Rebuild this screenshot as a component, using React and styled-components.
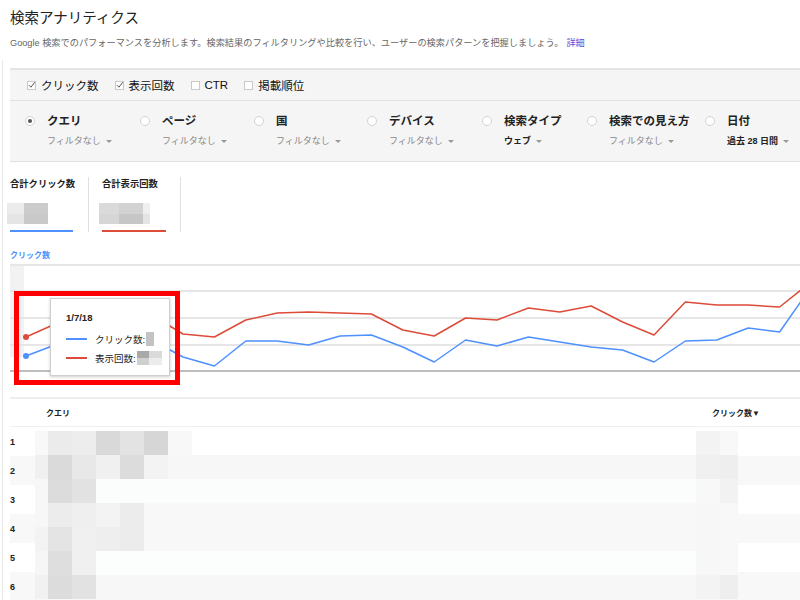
import React from 'react';
import styled, { createGlobalStyle } from 'styled-components';

const GlobalStyle = createGlobalStyle`
  body {
    margin: 0;
    background: #fff;
    font-family: "Liberation Sans", "Noto Sans CJK JP", sans-serif;
    color: #222;
    overflow: hidden;
  }
`;

const toggles = [
  { label: 'クリック数', checked: true },
  { label: '表示回数', checked: true },
  { label: 'CTR', checked: false },
  { label: '掲載順位', checked: false },
];

const dimensions = [
  { label: 'クエリ', sub: 'フィルタなし', w: 115, selected: true },
  { label: 'ページ', sub: 'フィルタなし', w: 114 },
  { label: '国', sub: 'フィルタなし', w: 113 },
  { label: 'デバイス', sub: 'フィルタなし', w: 115 },
  { label: '検索タイプ', sub: 'ウェブ', w: 105, strong: true },
  { label: '検索での見え方', sub: 'フィルタなし', w: 118 },
  { label: '日付', sub: '過去 28 日間', w: 90, strong: true },
];

const red = [338, 324, 322, 326, 316, 335, 338, 321, 314, 313, 314, 315, 331, 337, 319, 321, 309, 313, 307, 323, 336, 303, 306, 306, 308, 283];
const blue = [357, 345, 344, 343, 341, 358, 367, 342, 342, 346, 337, 336, 348, 363, 341, 347, 338, 343, 348, 351, 363, 342, 341, 329, 333, 288];

const toPoints = (arr) =>
  arr.map((y, k) => `${(16 + 31.4 * k).toFixed(1)},${y - 263}`).join(' ');

// pixelated blur blocks over the query table (24px grid)
const mosaic = [
  ['#f8f8f8', '#ebebeb', '#ededed', '#d9d9d9', '#e3e3e3', '#d6d6d6', '#f8f8f8', '#ffffff', '#f3f3f3', '#f8f8f8'],
  ['#f0f0f0', '#dadada', '#e8e8e8', '#f0f0f0', '#dcdcdc', '#f3f3f3', '#f7f7f7', '#f7f7f7', '#f0f0f0', '#eeeeee'],
  ['#f7f7f7', '#dcdcdc', '#e2e2e2', '#fbfcfc', '#fbfcfc', '#fbfcfc', '#fbfcfc', '#fbfcfc', '#f8f8f8', '#f2f2f2'],
  ['#f7f7f7', '#ececec', '#efefef', '#f3f3f3', '#ececec', '#f8f8f8', '#f8f8f8', '#f8f8f8', '#f7f7f7', '#f8f8f8'],
  ['#f3f3f3', '#e4e4e4', '#f0f0f0', '#eeeeee', '#ececec', '#f8f8f8', '#f8f8f8', '#f8f8f8', '#f7f7f7', '#f8f8f8'],
  ['#f6f6f6', '#dedede', '#f0f0f0', '#fcfdfd', '#fcfdfd', '#fcfdfd', '#fcfdfd', '#fcfdfd', '#f7f7f7', '#f8f8f8'],
  ['#f1f1f1', '#dcdcdc', '#e2e2e2', '#f7f7f7', '#f7f7f7', '#f7f7f7', '#f7f7f7', '#f7f7f7', '#f3f3f3', '#eeeeee'],
];
const mosaicWidths = [13, 24, 24, 24, 24, 24, 24, 504, 24, 18];

const CheckIcon = ({ checked }) => (
  <svg width="10" height="10" viewBox="0 0 10 10">
    <rect x="0.5" y="1.5" width="8" height="8" fill="#fff" stroke="#c9c9c9" />
    {checked && <path d="M2 5.2 L3.9 7.2 L7.8 2.2" fill="none" stroke="#555" strokeWidth="1" />}
  </svg>
);

const App = () => {
  return (
    <Page>
      <GlobalStyle />
      <Header>
        <Title>検索アナリティクス</Title>
        <Desc>
          Google 検索でのパフォーマンスを分析します。検索結果のフィルタリングや比較を行い、ユーザーの検索パターンを把握しましょう。
          <Link>詳細</Link>
        </Desc>
      </Header>

      <Main>
        <Toggles>
          {toggles.map((t) => (
            <ToggleItem key={t.label}>
              <CheckIcon checked={t.checked} />
              <span>{t.label}</span>
            </ToggleItem>
          ))}
        </Toggles>

        <Dimensions>
          {dimensions.map((d) => (
            <DimItem key={d.label} $w={d.w}>
              <Radio $selected={d.selected} />
              <DimText>
                <DimLabel>{d.label}</DimLabel>
                <DimSub $strong={d.strong}>
                  {d.sub}
                  <Caret />
                </DimSub>
              </DimText>
            </DimItem>
          ))}
        </Dimensions>

        <Metrics>
          <MetricCard $w={79} $pl={0} $pr={16}>
            <MetricLabel>合計クリック数</MetricLabel>
            <Blur $ml={-3}>
              <BlurCol $w={17} $top="#ebebeb" $bottom="#e5e5e5" />
              <BlurCol $w={24} $top="#cccccc" $bottom="#c9c9c9" />
            </Blur>
            <Underline $color="#4d90fe" $w={63} />
          </MetricCard>
          <MetricCard $w={92} $pl={13} $pr={15}>
            <MetricLabel>合計表示回数</MetricLabel>
            <Blur $ml={-3}>
              <BlurCol $w={20} $top="#dadada" $bottom="#d6d6d6" />
              <BlurCol $w={24} $top="#d2d2d2" $bottom="#c6c6c6" />
              <BlurCol $w={7} $top="#efefef" $bottom="#e4e4e4" />
            </Blur>
            <Underline $color="#dd4b39" $w={64} />
          </MetricCard>
        </Metrics>

        <ChartLabel>クリック数</ChartLabel>
        <ChartArea>
          <svg width="790" height="113" viewBox="0 0 790 113">
            <rect x="0" y="4" width="14" height="91" fill="#f2f2f2" />
            {[3, 29, 56, 83].map((y) => (
              <line key={y} x1="0" x2="790" y1={y} y2={y} stroke="#e6e6e6" strokeWidth="2" />
            ))}
            <line x1="0" x2="790" y1="109" y2="109" stroke="#a8a8a8" strokeWidth="1.5" />
            <polyline points={toPoints(red)} fill="none" stroke="#dd4b39" strokeWidth="1.5" strokeLinejoin="round" />
            <polyline points={toPoints(blue)} fill="none" stroke="#4d90fe" strokeWidth="1.5" strokeLinejoin="round" />
            <circle cx="16" cy={338 - 263} r="3" fill="#dd4b39" />
            <circle cx="16" cy={357 - 263} r="3" fill="#4d90fe" />
          </svg>
          <Highlight />
          <Tooltip>
            <TipDate>1/7/18</TipDate>
            <TipRows>
              <TipRow>
                <Swatch $color="#4d90fe" />
                <span>クリック数:</span>
                <TipBlur>
                  <BlurCol $w={8} $top="#c3c3c3" $bottom="#c3c3c3" />
                </TipBlur>
              </TipRow>
              <TipRow>
                <Swatch $color="#dd4b39" />
                <span>表示回数:</span>
                <TipBlur>
                  <BlurCol $w={12} $top="#a9a9a9" $bottom="#d0d0d0" />
                  <BlurCol $w={13} $top="#dadada" $bottom="#ececec" />
                </TipBlur>
              </TipRow>
            </TipRows>
          </Tooltip>
        </ChartArea>

        <Table>
          <HeadRow>
            <HeadQuery>クエリ</HeadQuery>
            <HeadClicks>クリック数▼</HeadClicks>
          </HeadRow>
          <TableBody>
            {[1, 2, 3, 4, 5, 6].map((n) => (
              <Row key={n} $odd={n % 2 === 0}>
                <RowNum>{n}</RowNum>
              </Row>
            ))}
            <Mosaic>
              {mosaic.map((band, i) => (
                <MosaicBand key={i}>
                  {band.map((c, j) => (
                    <MosaicCell key={j} $w={mosaicWidths[j]} $c={c} />
                  ))}
                </MosaicBand>
              ))}
            </Mosaic>
          </TableBody>
        </Table>
      </Main>
    </Page>
  );
};

export default App;

const Page = styled.div`
  width: 800px;
  height: 600px;
  padding-left: 10px;
  box-sizing: border-box;
  overflow: hidden;
`;

const Header = styled.header`
  padding: 8px 0 18px;
`;

const Title = styled.h1`
  margin: 0;
  font-size: 14.5px;
  line-height: 20px;
  font-weight: normal;
  color: #222;
`;

const Desc = styled.p`
  margin: 8px 0 0;
  font-size: 9.2px;
  line-height: 14px;
  color: #666;
  white-space: nowrap;
`;

const Link = styled.a`
  color: #6a4bd6;
  margin-left: 3px;
  cursor: pointer;
`;

const Main = styled.main`
  position: relative;
  border-top: 2px solid #e4e4e4;

  &::before {
    content: '';
    position: absolute;
    left: -8px;
    top: -10px;
    bottom: 0;
    width: 1px;
    background: #e8e8e8;
  }
`;

const Toggles = styled.div`
  display: flex;
  align-items: center;
  height: 30px;
  padding-left: 17px;
  background: #f5f5f5;
  border-bottom: 1px solid #e2e2e2;
`;

const ToggleItem = styled.label`
  display: flex;
  align-items: center;
  gap: 4px;
  margin-right: 16px;
  font-size: 11.5px;
  color: #111;

  svg {
    display: block;
  }
`;

const Dimensions = styled.div`
  display: flex;
  align-items: flex-start;
  height: 61px;
  box-sizing: border-box;
  padding: 12px 0 0 15px;
  background: #f5f5f5;
  border-bottom: 1px solid #e2e2e2;
`;

const DimItem = styled.div`
  display: flex;
  align-items: flex-start;
  width: ${(p) => p.$w}px;
  flex-shrink: 0;
`;

const Radio = styled.span`
  position: relative;
  width: 10px;
  height: 10px;
  margin-top: 3px;
  margin-right: 12px;
  box-sizing: border-box;
  border: 1px solid #d3d3d3;
  border-radius: 50%;
  background: #fff;
  flex-shrink: 0;

  &::after {
    content: '';
    display: ${(p) => (p.$selected ? 'block' : 'none')};
    position: absolute;
    left: 2px;
    top: 2px;
    width: 4px;
    height: 4px;
    border-radius: 50%;
    background: #555;
  }
`;

const DimText = styled.div`
  display: flex;
  flex-direction: column;
  white-space: nowrap;
`;

const DimLabel = styled.span`
  font-size: 11.5px;
  line-height: 16px;
  font-weight: bold;
  color: #222;
`;

const DimSub = styled.span`
  display: flex;
  align-items: center;
  margin-top: 5px;
  font-size: 9px;
  line-height: 14px;
  color: ${(p) => (p.$strong ? '#222' : '#888')};
  font-weight: ${(p) => (p.$strong ? 'bold' : 'normal')};
`;

const Caret = styled.span`
  margin-left: 5px;
  width: 0;
  height: 0;
  border-left: 3px solid transparent;
  border-right: 3px solid transparent;
  border-top: 3px solid #999;
`;

const Metrics = styled.section`
  display: flex;
  padding-top: 15px;
`;

const MetricCard = styled.div`
  display: flex;
  flex-direction: column;
  width: ${(p) => p.$w}px;
  padding-left: ${(p) => p.$pl}px;
  padding-right: ${(p) => p.$pr}px;
  box-sizing: border-box;
  border-right: 1px solid #e0e0e0;
  white-space: nowrap;
`;

const MetricLabel = styled.span`
  font-size: 9.3px;
  line-height: 14px;
  font-weight: bold;
  color: #222;
`;

const Blur = styled.div`
  display: flex;
  height: 21px;
  margin-top: 12px;
  margin-left: ${(p) => p.$ml}px;
`;

const BlurCol = styled.div`
  width: ${(p) => p.$w}px;
  background: linear-gradient(${(p) => p.$top} 50%, ${(p) => p.$bottom} 50%);
`;

const Underline = styled.div`
  width: ${(p) => p.$w}px;
  height: 2px;
  margin-top: 6px;
  background: ${(p) => p.$color};
`;

const ChartLabel = styled.div`
  margin-top: 18px;
  font-size: 8px;
  line-height: 12px;
  font-weight: bold;
  color: #4d90fe;
`;

const ChartArea = styled.div`
  position: relative;
  height: 113px;

  svg {
    display: block;
  }
`;

const Highlight = styled.div`
  position: absolute;
  left: 4px;
  top: 29px;
  width: 166px;
  height: 94px;
  box-sizing: border-box;
  border: 5px solid #ff0000;
`;

const Tooltip = styled.div`
  position: absolute;
  left: 40px;
  top: 36px;
  width: 120px;
  height: 78px;
  box-sizing: border-box;
  padding: 13px 0 0 15px;
  background: #fff;
  border: 1px solid #cfcfcf;
  box-shadow: 0 1px 3px rgba(0, 0, 0, 0.2);
`;

const TipDate = styled.div`
  font-size: 9.5px;
  line-height: 12px;
  font-weight: bold;
  color: #222;
`;

const TipRows = styled.div`
  display: flex;
  flex-direction: column;
  margin-top: 5px;
`;

const TipRow = styled.div`
  display: flex;
  align-items: center;
  height: 19px;
  font-size: 9.5px;
  color: #222;
  white-space: nowrap;
`;

const Swatch = styled.span`
  width: 21px;
  height: 2px;
  margin-right: 8px;
  background: ${(p) => p.$color};
`;

const TipBlur = styled.span`
  display: flex;
  height: 14px;
  margin-left: 1px;
`;

const Table = styled.section`
  margin-top: 22px;
  border-top: 2px solid #eeeeee;
`;

const HeadRow = styled.div`
  display: flex;
  align-items: center;
  height: 27px;
  padding: 0 40px 0 36px;
  border-bottom: 1px solid #efefef;
  font-size: 8px;
  font-weight: bold;
  color: #222;
`;

const HeadQuery = styled.span`
  flex: 1;
`;

const HeadClicks = styled.span``;

const TableBody = styled.div`
  position: relative;
`;

const Row = styled.div`
  display: flex;
  align-items: center;
  height: 29px;
  background: ${(p) => (p.$odd ? '#f8f8f8' : '#fff')};
`;

const RowNum = styled.span`
  font-size: 9px;
  font-weight: bold;
  color: #222;
`;

const Mosaic = styled.div`
  position: absolute;
  left: 25px;
  top: 4px;
  display: flex;
  flex-direction: column;
`;

const MosaicBand = styled.div`
  display: flex;
  height: 24px;
`;

const MosaicCell = styled.div`
  width: ${(p) => p.$w}px;
  background: ${(p) => p.$c};
`;
